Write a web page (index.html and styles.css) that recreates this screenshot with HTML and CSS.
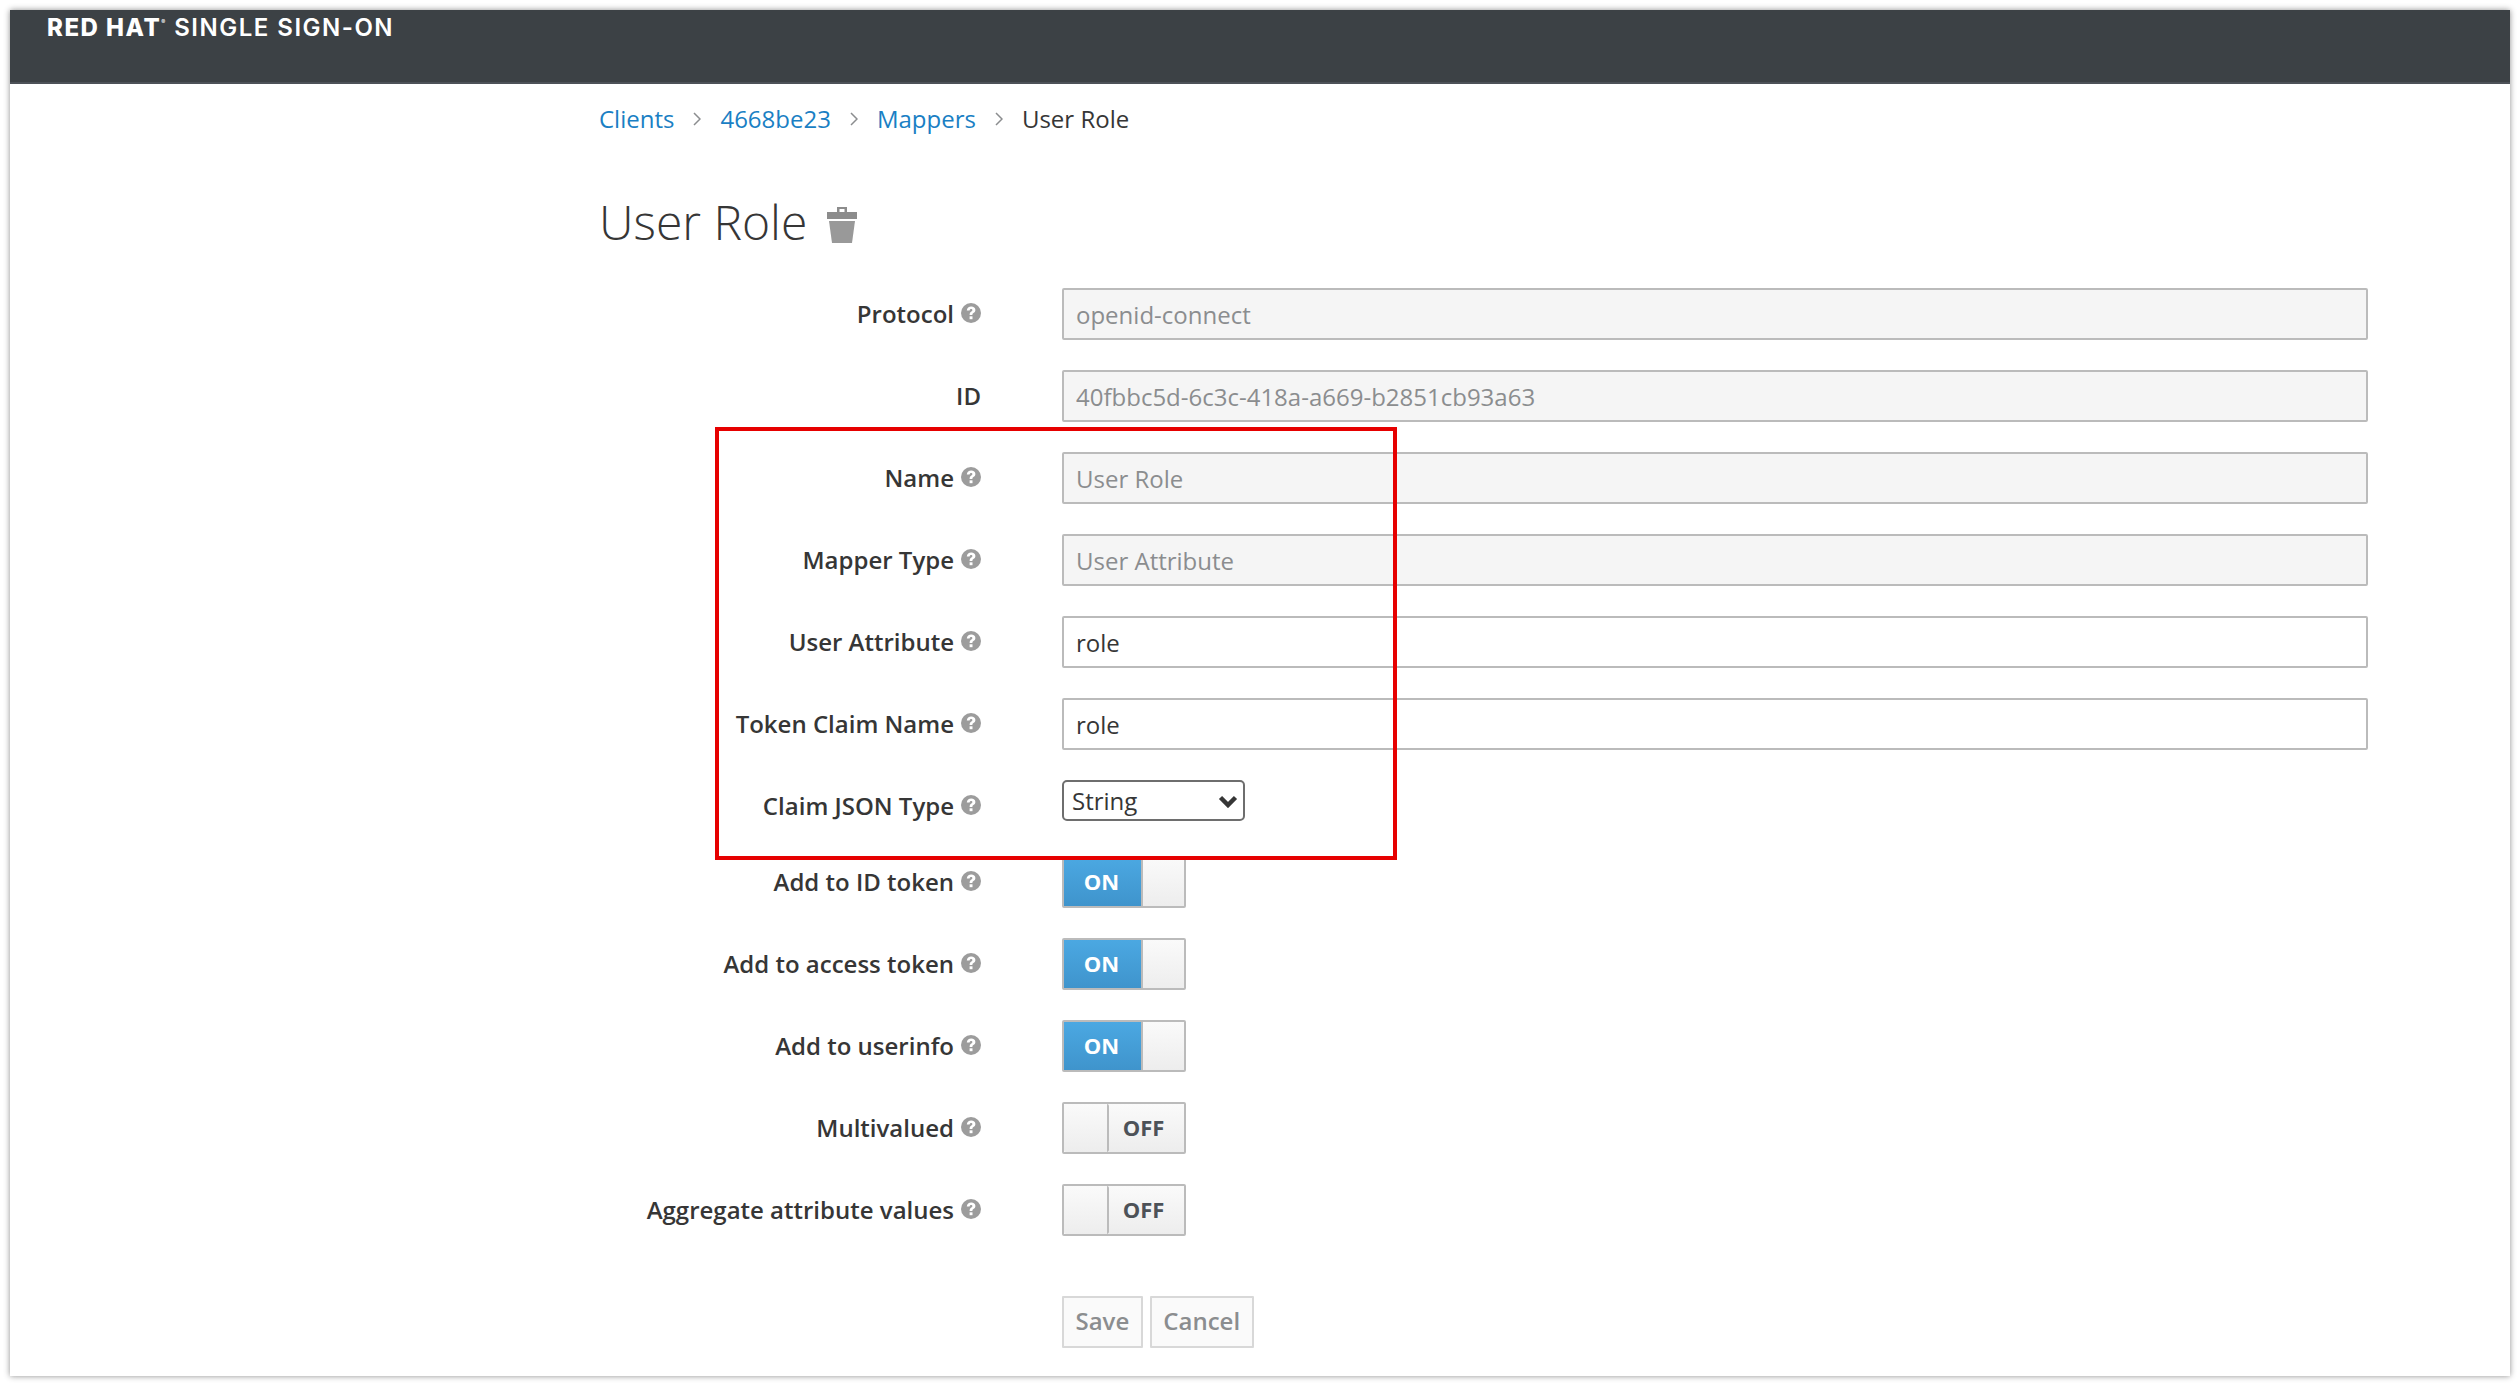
FILE: index.html
```html
<!DOCTYPE html>
<html lang="en">
<head>
<meta charset="UTF-8">
<title>User Role</title>
<link rel="stylesheet" href="styles.css">
</head>
<body>
    <svg class="iconDefs" width="0" height="0">
        <symbol id="help" viewBox="0 0 20 20">
            <circle cx="10" cy="10" r="10" fill="#9c9c9c"/>
            <path d="M5.800 7.500C6 4.900 7.800 3.400 10.200 3.400c2.500 0 4.200 1.400 4.200 3.500 0 1.600-.9 2.400-2 3.200-.8.600-1 1-1 1.900H8.600c0-1.700.4-2.500 1.500-3.300.9-.7 1.300-1 1.300-1.600 0-.7-.5-1.200-1.300-1.200-.9 0-1.400.6-1.500 1.600z" fill="#fff"/>
            <rect x="8.600" y="13.300" width="2.900" height="2.900" fill="#fff"/>
        </symbol>
        <symbol id="crumb" viewBox="0 0 8 14">
            <path d="M1 1l6 6-6 6" fill="none" stroke="#8b8d8f" stroke-width="1.500"/>
        </symbol>
    </svg>
    <div class="window">
        <header class="topBar">
            <span class="brand"><b>RED HAT</b><sup>®</sup> SINGLE SIGN-ON</span>
        </header>
        <main class="content">
            <nav class="breadcrumb">
                <a href="#">Clients</a><svg class="sep"><use href="#crumb"/></svg>
                <a href="#">4668be23</a><svg class="sep"><use href="#crumb"/></svg>
                <a href="#">Mappers</a><svg class="sep"><use href="#crumb"/></svg>
                <span>User Role</span>
            </nav>
            <h1 class="pageTitle">User Role
                <svg class="trash" viewBox="0 0 30 36"><path d="M10 0h10v5h10v7H0V5h10zM12.500 2v3h5V2z" fill="#8c8c8c" fill-rule="evenodd"/><path d="M2 14h26l-3 22H5z" fill="#999"/></svg>
            </h1>
            <form class="mapperForm">
                <div class="row"><label class="rowLabel">Protocol <svg class="help"><use href="#help"/></svg></label><input class="field" value="openid-connect" disabled></div>
                <div class="row"><label class="rowLabel">ID</label><input class="field" value="40fbbc5d-6c3c-418a-a669-b2851cb93a63" disabled></div>
                <div class="row"><label class="rowLabel">Name <svg class="help"><use href="#help"/></svg></label><input class="field" value="User Role" disabled></div>
                <div class="row"><label class="rowLabel">Mapper Type <svg class="help"><use href="#help"/></svg></label><input class="field" value="User Attribute" disabled></div>
                <div class="row"><label class="rowLabel">User Attribute <svg class="help"><use href="#help"/></svg></label><input class="field" value="role"></div>
                <div class="row"><label class="rowLabel">Token Claim Name <svg class="help"><use href="#help"/></svg></label><input class="field" value="role"></div>
                <div class="row rowSelect"><label class="rowLabel">Claim JSON Type <svg class="help"><use href="#help"/></svg></label>
                    <div class="selectWrap">
                        <select class="typeSelect"><option>String</option></select>
                        <svg class="selectArrow" viewBox="0 0 20 13"><path d="M2.500 2.500L10 10l7.500-7.500" fill="none" stroke="#363636" stroke-width="4.500"/></svg>
                    </div>
                </div>
                <div class="row"><label class="rowLabel">Add to ID token <svg class="help"><use href="#help"/></svg></label><div class="toggle"><span class="on">ON</span><span class="knob"></span></div></div>
                <div class="row"><label class="rowLabel">Add to access token <svg class="help"><use href="#help"/></svg></label><div class="toggle"><span class="on">ON</span><span class="knob"></span></div></div>
                <div class="row"><label class="rowLabel">Add to userinfo <svg class="help"><use href="#help"/></svg></label><div class="toggle"><span class="on">ON</span><span class="knob"></span></div></div>
                <div class="row"><label class="rowLabel">Multivalued <svg class="help"><use href="#help"/></svg></label><div class="toggle"><span class="knob knobOff"></span><span class="off">OFF</span></div></div>
                <div class="row"><label class="rowLabel">Aggregate attribute values <svg class="help"><use href="#help"/></svg></label><div class="toggle"><span class="knob knobOff"></span><span class="off">OFF</span></div></div>
                <div class="row rowButtons">
                    <button type="button" class="btn">Save</button>
                    <button type="button" class="btn">Cancel</button>
                </div>
            </form>
        </main>
        <div class="redBox"></div>
    </div>
</body>
</html>
```
FILE: styles.css
```css
html, body {
    margin: 0;
    background: #fff;
}

body {
    font-family: "Open Sans", sans-serif;
    font-size: 24px;
    color: #363636;
}

.iconDefs {
    position: absolute;
}

.window {
    position: relative;
    box-sizing: border-box;
    width: 2500px;
    height: 1366px;
    margin: 10px;
    background: #fff;
    box-shadow: 0 0 6px rgba(0, 0, 0, 0.45);
    overflow: hidden;
}

.topBar {
    box-sizing: border-box;
    height: 74px;
    padding: 0 0 0 37px;
    background: #3c4145;
    border-bottom: 2px solid #4d5258;
}

.brand {
    font-family: Inter, sans-serif;
    font-weight: 600;
    font-size: 24px;
    line-height: 36px;
    letter-spacing: 1.500px;
    color: #fff;
}

.brand b {
    font-weight: 800;
}

.brand sup {
    font-size: 6px;
    vertical-align: 12px;
    line-height: 0;
}

.content {
    padding: 16px 0 0 589px;
}

.breadcrumb {
    display: flex;
    align-items: center;
    height: 36px;
}

.breadcrumb a {
    color: #1a7fc4;
    text-decoration: none;
}

.sep {
    width: 8px;
    height: 14px;
    margin: 2px 19px 0;
}

.pageTitle {
    display: flex;
    align-items: center;
    gap: 20px;
    height: 66px;
    margin: 52px 0 0;
    font-size: 48px;
    font-weight: 300;
    color: #363636;
}

.trash {
    width: 30px;
    height: 36px;
    margin-top: 8px;
}

.mapperForm {
    margin: 34px 0 0 -589px;
}

.row {
    display: flex;
    align-items: center;
    height: 52px;
    margin-bottom: 30px;
}

.rowLabel {
    display: flex;
    align-items: center;
    justify-content: flex-end;
    gap: 7px;
    box-sizing: border-box;
    width: 1052px;
    height: 52px;
    padding: 0 81px 2px 0;
    font-weight: 600;
}

.help {
    width: 20px;
    height: 20px;
}

.field {
    box-sizing: border-box;
    width: 1306px;
    height: 52px;
    padding: 0 12px;
    background: #fff;
    border: 2px solid #bbb;
    border-radius: 2px;
    font: inherit;
    color: #363636;
}

.field:disabled {
    background: #f5f5f5;
    color: #8b8d8f;
}

.rowSelect {
    align-items: flex-start;
    margin-bottom: 24px;
}

.selectWrap {
    position: relative;
    width: 183px;
    height: 41px;
}

.typeSelect {
    display: block;
    box-sizing: border-box;
    width: 100%;
    height: 100%;
    padding: 0 0 0 8px;
    background: #fff;
    border: 2px solid #6e6e6e;
    border-radius: 5px;
    appearance: none;
    font: inherit;
    color: #363636;
}

.selectArrow {
    position: absolute;
    top: 15px;
    right: 7px;
    width: 20px;
    height: 13px;
    pointer-events: none;
}

.toggle {
    display: flex;
    box-sizing: border-box;
    width: 124px;
    height: 52px;
    border: 2px solid #bbb;
    border-radius: 2px;
    font-size: 22px;
    font-weight: 700;
}

.on {
    display: flex;
    align-items: center;
    justify-content: center;
    box-sizing: border-box;
    width: 77px;
    padding: 0 2px 2px 0;
    background: linear-gradient(#4ba8e2, #3f94cc);
    color: #fff;
}

.off {
    display: flex;
    flex: 1;
    align-items: center;
    justify-content: center;
    padding: 0 6px 2px 0;
    background: linear-gradient(#fafafa, #ededed);
    color: #4d5258;
}

.knob {
    flex: 1;
    background: linear-gradient(#fafafa, #ededed);
    border-left: 2px solid #bbb;
}

.knobOff {
    flex: none;
    width: 43px;
    border-left: 0;
    border-right: 2px solid #bbb;
    border-radius: 2px;
}

.rowButtons {
    gap: 7px;
    margin: 60px 0 0 1052px;
}

.btn {
    box-sizing: border-box;
    height: 52px;
    padding: 0 11.500px 3px;
    background: #fafafa;
    border: 2px solid #d8d8d8;
    border-radius: 1px;
    font: inherit;
    font-weight: 600;
    color: #8b8d8f;
}

.redBox {
    position: absolute;
    left: 705px;
    top: 417px;
    box-sizing: border-box;
    width: 682px;
    height: 433px;
    border: 4px solid #e60000;
}
```
